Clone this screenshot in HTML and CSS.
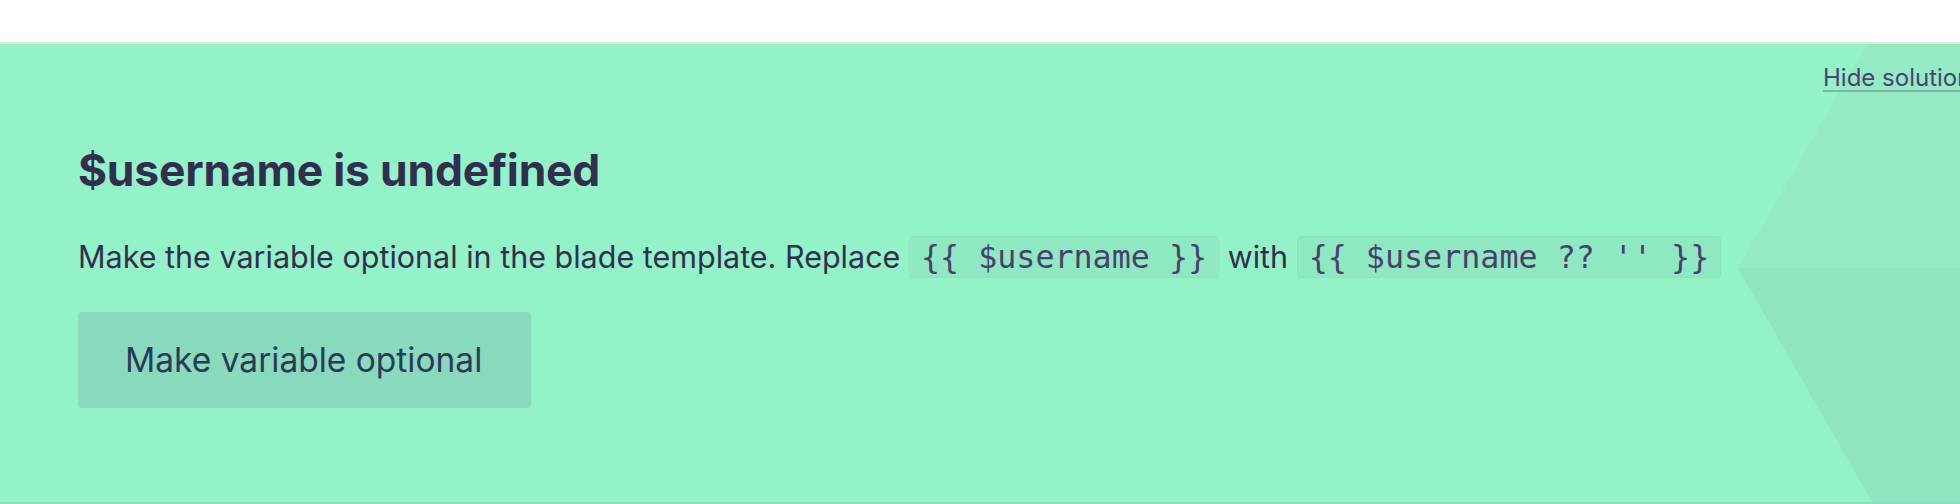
FILE: index.html
```html
<!DOCTYPE html>
<html lang="en">
<head>
<meta charset="utf-8">
<title>Solution</title>
<link rel="stylesheet" href="styles.css">
</head>
<body>
<div class="topbar"></div>
<section class="solution">
  <svg class="solution-bg" viewBox="0 0 222 458" preserveAspectRatio="none" aria-hidden="true">
    <polygon class="hex-top" points="0,224 129,0 222,0 222,224"/>
    <polygon class="hex-bottom" points="0,224 222,224 222,458 134,458"/>
  </svg>
  <a class="hide-link" href="#">Hide solution</a>
  <div class="solution-content">
    <h2 class="solution-title">$username is undefined</h2>
    <p class="solution-text">Make the variable optional in the blade template. Replace <code class="code">{{ $username }}</code> with <code class="code">{{ $username ?? '' }}</code></p>
    <button class="solution-button" type="button">Make variable optional</button>
  </div>
</section>
</body>
</html>
```

FILE: styles.css
```css
html, body {
  margin: 0;
  padding: 0;
  background: #ffffff;
}

body {
  width: 1960px;
  height: 504px;
  overflow: hidden;
  font-family: Inter, "Liberation Sans", sans-serif;
}

.topbar {
  height: 42px;
  border-bottom: 2px solid #e3e3e8;
  background: #ffffff;
}

.solution {
  position: relative;
  height: 458px;
  background: #94f2c9;
  border-bottom: 2px solid #8ddfbd;
  overflow: hidden;
}

.solution-bg {
  position: absolute;
  top: 0;
  right: 0;
  width: 222px;
  height: 458px;
}

.hex-top {
  fill: #93eac5;
}

.hex-bottom {
  fill: #8ee5c0;
}

.hide-link {
  position: absolute;
  top: 19px;
  left: 1823px;
  font-size: 24px;
  line-height: 30px;
  color: #4a4372;
  text-decoration: underline;
  text-decoration-color: #7fb3a6;
  text-decoration-thickness: 2px;
  text-underline-offset: 4px;
  white-space: nowrap;
}

.solution-content {
  position: relative;
  display: flex;
  flex-direction: column;
  align-items: flex-start;
  padding: 100px 0 0 78px;
}

.solution-title {
  margin: 0;
  font-size: 44.4px;
  line-height: 52px;
  font-weight: 700;
  color: #322e50;
  letter-spacing: -0.2px;
}

.solution-text {
  margin: 40px 0 0;
  font-size: 30.5px;
  line-height: 42px;
  color: #322e50;
}

.code {
  display: inline-block;
  font-family: "DejaVu Sans Mono", "Liberation Mono", monospace;
  font-size: 31.7px;
  line-height: 40px;
  padding: 0 11px;
  background: #8ee9c3;
  border: 1px solid #8ae3be;
  border-radius: 4px;
  color: #4b3f6d;
}

.solution-button {
  margin-top: 34px;
  width: 453px;
  height: 96px;
  padding: 0 0 0 47px;
  text-align: left;
  border: none;
  border-radius: 4px;
  background: #89d9bd;
  font-family: Inter, "Liberation Sans", sans-serif;
  font-size: 33.5px;
  color: #2c3a5a;
}
```
